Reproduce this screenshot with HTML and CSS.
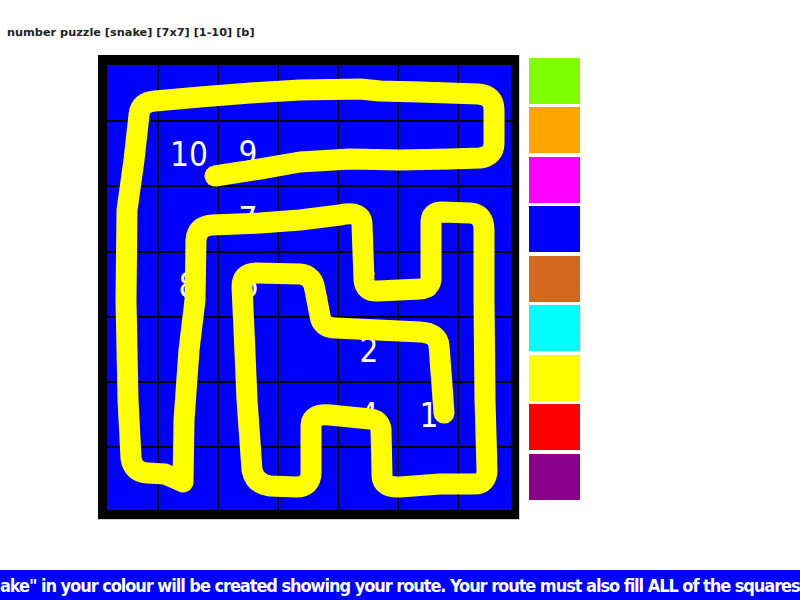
FILE: index.html
```html
<!DOCTYPE html>
<html>
<head>
<meta charset="utf-8">
<link rel="stylesheet" href="styles.css">
</head>
<body>
<div class="title">number puzzle [snake] [7x7] [1-10] [b]</div>
<div class="main">
  <svg class="board" width="422" height="465" viewBox="0 0 422 465">
    <rect x="0" y="0" width="422" height="465" fill="#d0d0d0"/>
    <rect x="0" y="0" width="421" height="464" fill="#000"/>
    <rect x="9" y="10" width="404" height="445" fill="#0000ff"/>
    <g stroke="#000" stroke-width="2">
      <line x1="60" y1="10" x2="60" y2="455"/>
      <line x1="120" y1="10" x2="120" y2="455"/>
      <line x1="180" y1="10" x2="180" y2="455"/>
      <line x1="240" y1="10" x2="240" y2="455"/>
      <line x1="300" y1="10" x2="300" y2="455"/>
      <line x1="360" y1="10" x2="360" y2="455"/>
      <line x1="9" y1="66" x2="413" y2="66"/>
      <line x1="9" y1="131" x2="413" y2="131"/>
      <line x1="9" y1="197" x2="413" y2="197"/>
      <line x1="9" y1="262" x2="413" y2="262"/>
      <line x1="9" y1="327" x2="413" y2="327"/>
      <line x1="9" y1="392" x2="413" y2="392"/>
    </g>
    <g transform="translate(-98,-55)">
      <g class="num">
        <text x="189" y="166">10</text>
        <text x="248" y="165">9</text>
        <text x="248" y="231">7</text>
        <text x="188" y="297">8</text>
        <text x="249" y="297">6</text>
        <text x="369" y="297">5</text>
        <text x="429" y="297">3</text>
        <text x="369" y="362">2</text>
        <text x="369" y="427">4</text>
        <text x="429" y="427">1</text>
      </g>
      <path fill="none" stroke="#ffff00" stroke-width="21" stroke-linecap="round" stroke-linejoin="round"
        d="M215,176 L260,169 L300,162 L350,159 L400,160 L450,159 L480,158 Q494,156 494,143 L494,110 Q494,95 478,94 L420,92 L380,91 L360,89 L300,90 L250,93 L200,97 L155,101 Q140,102 139,115 L134,160 L127,210 L126,300 L128,400 L131,458 Q133,472 147,473 L165,474 L183,482 L184,420 L189,350 L195,300 L196,240 Q197,226 212,225 L260,223 L300,220 L340,215 Q362,210 362,225 L364,280 Q365,292 378,291 L420,289 Q432,288 431,276 L431,222 Q431,212 442,212 L470,213 Q484,214 484,230 L484,300 L485,400 L487,470 Q487,484 474,484 L440,484 L400,487 Q382,488 382,475 L381,430 Q380,420 370,419 L330,415 Q312,413 311,425 L311,472 Q311,487 296,487 L270,486 Q255,484 252,470 L247,400 L244,330 L242,287 Q242,273 256,273 L300,274 Q313,275 315,290 L320,316 Q322,328 336,328 L420,332 Q438,333 439,346 L442,385 L444,413"/>
    </g>
  </svg>
  <div class="palette">
    <div class="sw c1"></div>
    <div class="sw c2"></div>
    <div class="sw c3"></div>
    <div class="sw c4"></div>
    <div class="sw c5"></div>
    <div class="sw c6"></div>
    <div class="sw c7"></div>
    <div class="sw c8"></div>
    <div class="sw c9"></div>
  </div>
</div>
<div class="banner">ake" in your colour will be created showing your route. Your route must also fill ALL of the squares on the grid.</div>
</body>
</html>
```
FILE: styles.css
```css
html, body {
  margin: 0;
  padding: 0;
  background: #fff;
  overflow: hidden;
}
body {
  width: 800px;
  height: 600px;
}
.title {
  box-sizing: border-box;
  height: 55px;
  padding: 26px 0 0 7px;
  font-family: "DejaVu Sans", Verdana, sans-serif;
  font-weight: bold;
  font-size: 11.3px;
  line-height: 14px;
  color: #222;
}
.main {
  display: flex;
  align-items: flex-start;
  margin-left: 98px;
  height: 515px;
}
.board {
  display: block;
  flex: none;
}
.board .num text {
  font-family: "Liberation Sans Narrow", "DejaVu Sans Condensed", sans-serif;
  font-size: 33px;
  fill: #fff;
  text-anchor: middle;
}
.palette {
  display: flex;
  flex-direction: column;
  gap: 3.5px;
  margin-left: 9px;
  margin-top: 2.7px;
}
.sw {
  width: 51px;
  height: 46px;
}
.c1 { background: #80ff00; }
.c2 { background: #ffa500; }
.c3 { background: #ff00ff; }
.c4 { background: #0000ff; }
.c5 { background: #d2691e; }
.c6 { background: #00ffff; }
.c7 { background: #ffff00; }
.c8 { background: #ff0000; }
.c9 { background: #8b008b; }
.banner {
  box-sizing: border-box;
  height: 30px;
  padding-top: 1px;
  background: #0000ff;
  color: #fff;
  font-family: "DejaVu Sans Condensed", sans-serif;
  font-weight: bold;
  font-size: 18px;
  letter-spacing: -1.05px;
  line-height: 30px;
  white-space: nowrap;
  overflow: hidden;
}
```
